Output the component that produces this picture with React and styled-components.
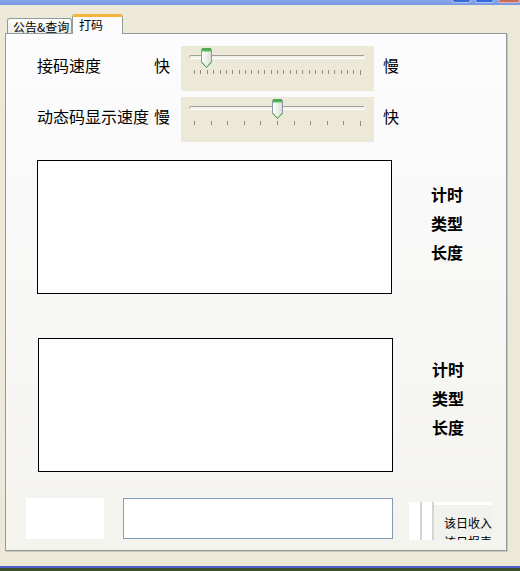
import React from "react";
import styled, { createGlobalStyle } from "styled-components";

const Global = createGlobalStyle`
  html, body { margin: 0; padding: 0; background: #ECE9D8; }
  body { font-family: "Noto Sans CJK SC", "Noto Sans", sans-serif; color: #000; }
  * { box-sizing: border-box; }
`;

const Screen = styled.div`
  width: 520px;
  height: 571px;
  display: flex;
  flex-direction: column;
  overflow: hidden;
  background: #ECE9D8;
  position: relative;
`;

const TitleBar = styled.div`
  height: 5px;
  flex: none;
  background: linear-gradient(#86A6EA, #7898E2);
  display: flex;
  justify-content: flex-end;
  align-items: flex-start;
  gap: 4px;
`;

const WinButton = styled.div`
  width: ${(p) => p.$w}px;
  height: 3px;
  background: ${(p) => (p.$red ? "#C86C5E" : "#3468DC")};
  border: 1px solid ${(p) => (p.$red ? "#E8B0A8" : "#A9C2F2")};
  border-top: none;
  border-radius: 0 0 3px 3px;
`;

const TabStrip = styled.div`
  height: 28px;
  flex: none;
  display: flex;
  align-items: flex-end;
  padding-left: 7px;
  position: relative;
  z-index: 1;
`;

const Tab = styled.div`
  width: 65px;
  height: 15px;
  border: 1px solid #919B9C;
  border-bottom: none;
  border-radius: 3px 3px 0 0;
  background: linear-gradient(#FFFFFF, #ECEBE5);
  font-size: 12px;
  line-height: 13px;
  padding: 1px 0 0 5px;
  white-space: nowrap;
`;

const ActiveTab = styled.div`
  width: 51px;
  height: 20px;
  margin-bottom: -1px;
  border: 1px solid #919B9C;
  border-top: 3px solid #F5B43A;
  border-bottom: none;
  border-radius: 3px 3px 0 0;
  background: #FCFCFE;
  font-size: 12px;
  line-height: 13px;
  padding: 1px 0 0 6px;
  white-space: nowrap;
`;

const Panel = styled.div`
  flex: none;
  width: 502px;
  height: 518px;
  margin-left: 5px;
  border: 1px solid #919B9C;
  box-shadow: 1px 1px 0 #C9C6B6;
  background: linear-gradient(#FCFCFE, #F4F3EE);
  display: flex;
  flex-direction: column;
`;

const SliderRow = styled.div`
  display: flex;
  align-items: flex-start;
  padding-left: 31px;
  margin-top: ${(p) => p.$top}px;
`;

const RowLabel = styled.div`
  width: 117px;
  font-size: 16px;
  line-height: 16px;
  padding-top: 11px;
  white-space: nowrap;
`;

const EndLabel = styled.div`
  width: 16px;
  font-size: 16px;
  line-height: 16px;
  padding-top: 11px;
  margin-right: ${(p) => p.$mr || 0}px;
  margin-left: ${(p) => p.$ml || 0}px;
`;

const SliderBox = styled.div`
  position: relative;
  width: 193px;
  height: 45px;
  background: #ECE9D8;
  padding: 9px 9px 0 8px;
`;

const Track = styled.div`
  height: 4px;
  border-top: 1px solid #A19F96;
  border-left: 1px solid #B9B7AD;
  border-bottom: 1px solid #FFFFFF;
  border-right: 1px solid #FFFFFF;
  background: #F2F1EC;
  border-radius: 2px;
`;

const Ticks = styled.div`
  display: flex;
  justify-content: space-between;
  align-items: flex-start;
  width: 167px;
  margin: 11px 0 0 5px;
`;

const Tick = styled.div`
  width: 1px;
  height: ${(p) => (p.$long ? 5 : 4)}px;
  background: #8E8D86;
`;

const ThumbWrap = styled.div`
  position: absolute;
  top: 2px;
  width: 11px;
  height: 21px;
  line-height: 0;
`;

const BoxRow = styled.div`
  display: flex;
  align-items: flex-start;
  margin-top: ${(p) => p.$top}px;
  padding-left: ${(p) => p.$left}px;
`;

const DisplayBox = styled.div`
  width: 355px;
  height: 134px;
  border: 1px solid #000;
  background: #FFFFFF;
`;

const SideLabels = styled.div`
  margin-left: 39px;
  padding-top: ${(p) => p.$top}px;
  font-size: 16px;
  font-weight: bold;
  line-height: 29px;
  display: flex;
  flex-direction: column;
`;

const BottomRow = styled.div`
  display: flex;
  align-items: flex-start;
  margin-top: 26px;
  padding-left: 20px;
`;

const WhiteBlock = styled.div`
  width: 78px;
  height: 41px;
  background: #FFFFFF;
`;

const TextInput = styled.div`
  width: 270px;
  height: 41px;
  margin-left: 19px;
  border: 1px solid #7F9DB9;
  background: #FFFFFF;
`;

const ClippedCtrl = styled.div`
  width: 83px;
  height: 38px;
  margin: 4px 0 0 16px;
  background: #FFFFFF;
  overflow: hidden;
  display: flex;
`;

const Spacer = styled.div`
  width: ${(p) => p.$w}px;
  flex: none;
`;

const Divider = styled.div`
  width: 2px;
  flex: none;
  background: #D4D4D0;
`;

const Legend = styled.div`
  flex: 1;
  margin-top: 3px;
  background: #F1F1EE;
  padding-top: 8px;
  font-size: 12px;
  line-height: 19px;
  text-align: right;
  white-space: nowrap;
`;

const Footer = styled.div`
  flex: 1;
  display: flex;
  flex-direction: column;
  justify-content: flex-end;
`;

const Desktop = styled.div`
  height: 5px;
  flex: none;
  border-top: 2px solid #4D5ECF;
  background: #3C522C;
`;

function Thumb({ left }) {
  return (
    <ThumbWrap style={{ left }}>
      <svg width="11" height="21" viewBox="0 0 11 21">
        <defs>
          <linearGradient id="tb" x1="0" y1="0" x2="1" y2="0">
            <stop offset="0" stopColor="#FFFFFF" />
            <stop offset="1" stopColor="#DCDCD6" />
          </linearGradient>
        </defs>
        <path d="M0.5 2 Q0.5 0.5 2 0.5 H9 Q10.5 0.5 10.5 2 V14 L5.5 19.5 L0.5 14 Z" fill="url(#tb)" stroke="#8C99A3" />
        <path d="M0.5 14 L5.5 19.5 L10.5 14" fill="none" stroke="#3DAA3D" />
        <path d="M1 1.5 Q1 1 2 1 H9 Q10 1 10 1.5 V3.5 H1 Z" fill="#4CC34C" />
        <path d="M1 1 H10" stroke="#2E9E2E" />
      </svg>
    </ThumbWrap>
  );
}

function Slider({ count, value }) {
  const spacing = 166 / (count - 1);
  const center = 13 + value * spacing;
  return (
    <SliderBox>
      <Track />
      <Ticks>
        {Array.from({ length: count }, (_, i) => (
          <Tick key={i} $long={i === count - 1} />
        ))}
      </Ticks>
      <Thumb left={Math.round(center - 5.5)} />
    </SliderBox>
  );
}

export default function App() {
  return (
    <Screen>
      <Global />
      <TitleBar>
        <WinButton $w={19} />
        <WinButton $w={19} />
        <WinButton $w={22} $red />
      </TitleBar>
      <TabStrip>
        <Tab>公告&amp;查询</Tab>
        <ActiveTab>打码</ActiveTab>
      </TabStrip>
      <Panel>
        <SliderRow $top={12}>
          <RowLabel>接码速度</RowLabel>
          <EndLabel $mr={11}>快</EndLabel>
          <Slider count={27} value={2} />
          <EndLabel $ml={9}>慢</EndLabel>
        </SliderRow>
        <SliderRow $top={6}>
          <RowLabel>动态码显示速度</RowLabel>
          <EndLabel $mr={11}>慢</EndLabel>
          <Slider count={11} value={5} />
          <EndLabel $ml={9}>快</EndLabel>
        </SliderRow>
        <BoxRow $top={18} $left={31}>
          <DisplayBox />
          <SideLabels $top={20}>
            <span>计时</span>
            <span>类型</span>
            <span>长度</span>
          </SideLabels>
        </BoxRow>
        <BoxRow $top={44} $left={32}>
          <DisplayBox />
          <SideLabels $top={17}>
            <span>计时</span>
            <span>类型</span>
            <span>长度</span>
          </SideLabels>
        </BoxRow>
        <BottomRow>
          <WhiteBlock />
          <TextInput />
          <ClippedCtrl>
            <Spacer $w={11} />
            <Divider />
            <Spacer $w={10} />
            <Divider />
            <Legend>
              该日收入
              <br />
              该日报表
            </Legend>
          </ClippedCtrl>
        </BottomRow>
      </Panel>
      <Footer>
        <Desktop />
      </Footer>
    </Screen>
  );
}
